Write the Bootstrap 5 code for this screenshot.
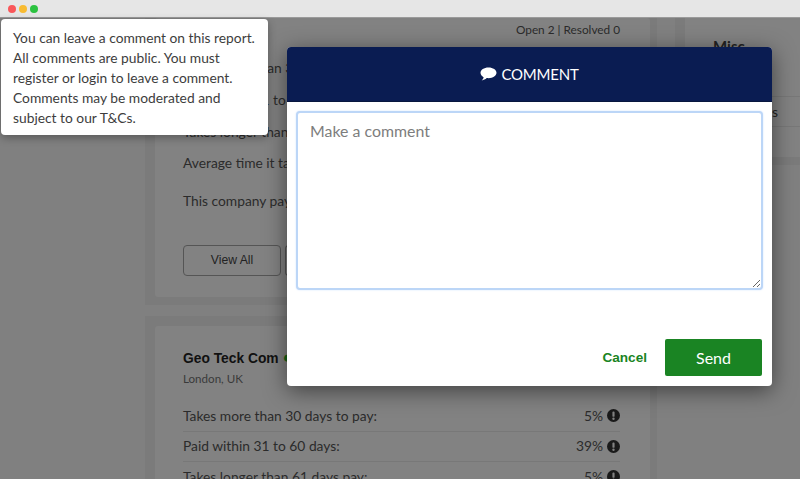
<!DOCTYPE html>
<html lang="en"><head><meta charset="utf-8"><title>Comment</title>
<link href="https://cdn.jsdelivr.net/npm/bootstrap@5.3.0/dist/css/bootstrap.min.css" rel="stylesheet">
<style>
html,body{height:100%;overflow:hidden}
body{background:#808080;font-family:Lato,"Noto Sans",sans-serif;color:#2b2b2b;width:800px;height:479px;position:relative}
.chrome{height:18px;background:#e6e6e6;border-bottom:1px solid #9a9a9a;gap:3px;padding-left:8px}
.dot{width:8px;height:8px;border-radius:50%}
.dot-r{background:#f9575a}.dot-y{background:#f8bb32}.dot-g{background:#2cc240}
.stage{height:461px;overflow:hidden;padding-left:145px;gap:18px}
.col-main{width:512px;flex:none}
.col-side{width:125px;flex:none}
.panel{background:#7b7b7b;padding:0 7px 8px 10px}
.panel-top{height:287px}
.panel-bottom{margin-top:11px;height:200px;padding-top:10px}
.panel-in{background:#828282;border-radius:3px;height:100%;padding:0 30px 0 28px;font-size:13.8px;position:relative}
.counts{text-align:right;font-size:11.8px;padding-top:5px;height:18px;line-height:14px}
.rowline{height:32px;line-height:32px;white-space:nowrap}
.rowline-short{height:31px}
.para{height:39px;line-height:22px;white-space:nowrap;margin-top:11px}
.vbtn{width:98px;height:31px;border:1px solid #555;border-radius:4px;font:12.2px/29px "Liberation Sans",sans-serif;color:#222;text-align:center;background:transparent;padding:0}
.vbtn2{width:30px;border-right:0;border-radius:4px 0 0 4px}
.geo{font:700 13.8px/18px "Liberation Sans",sans-serif;color:#111;padding-top:23px}
.geo span{color:#176317;font-size:17px;line-height:1}
.loc{font-size:11.6px;line-height:16px;margin-top:3px;margin-bottom:14px;color:#3a3a3a}
.statrow{height:30.5px;line-height:28px;border-bottom:1px solid #787878;white-space:nowrap}
.exc{width:13px;height:13px;flex:none}
.side-in{background:#828282;height:100%;padding:17px 0 0 28px;font-size:15px;font-weight:700;color:#222}
.sideline{height:30px;border-bottom:1px solid #787878;font-weight:400;margin-left:-28px;text-align:right;font-size:13.8px;padding-right:22px;padding-top:5px}
.sideline-first{height:39px}
.modal-box{position:absolute;left:287px;top:47px;width:485px;height:339px;background:#fff;border-radius:4px;box-shadow:0 5px 22px rgba(0,0,0,.5);overflow:hidden}
.modal-head{height:55px;background:#0a1c52;color:#fff;font-size:15px;letter-spacing:-.2px;gap:4px;border-bottom:1px solid #08173f}
.comment-area{display:block;width:467px;height:179px;margin:9px 0 0 9px;border:2px solid #bcd6f7;border-radius:4px;box-shadow:0 0 2px #cfe2ff;padding:6px 12px;font-size:15.9px;font-family:inherit;color:#333}
.comment-area::placeholder{color:#7d7d7d}
.modal-foot{padding:49px 10px 0 0;gap:18px}
.btn-cancel{font:700 13.6px "Liberation Sans",sans-serif;color:#1a8423;padding:0;border:0;background:none}
.btn-send{width:97px;height:37px;background:#1a8423;color:#fff;font-size:16px;border:0;border-radius:2px;padding:0}
.tip{position:absolute;left:1px;top:19px;width:267px;height:116px;background:#fff;border-radius:4px;box-shadow:0 3px 8px rgba(0,0,0,.3);padding:9px 12px;font-size:13.8px;line-height:20px;color:#3d3d3d}
</style></head>
<body>
<div class="chrome d-flex align-items-center"><span class="dot dot-r"></span><span class="dot dot-y"></span><span class="dot dot-g"></span></div>
<div class="stage d-flex">
  <div class="col-main">
    <div class="panel panel-top"><div class="panel-in">
      <div class="counts">Open 2 | Resolved 0</div>
      <div class="rowline mt-3">Takes more than 30 days to pay:</div>
      <div class="rowline">Paid within 31 to 60 days:</div>
      <div class="rowline rowline-short">Takes longer than 61 days pay:</div>
      <div class="rowline">Average time it takes to pay:</div>
      <div class="para">This company pays on time</div>
      <div class="d-flex gap-1 mt-3"><button class="vbtn">View All</button><button class="vbtn vbtn2"></button></div>
    </div></div>
    <div class="panel panel-bottom"><div class="panel-in">
      <div class="geo">Geo Teck Com <span>●</span></div>
      <div class="loc">London, UK</div>
      <div class="statrow d-flex justify-content-between align-items-center"><span>Takes more than 30 days to pay:</span><span class="d-flex align-items-center gap-1">5% <svg class="exc" viewBox="0 0 12 12"><circle cx="6" cy="6" r="6" fill="#1a1a1a"/><rect x="5" y="2.4" width="2" height="4.8" rx=".8" fill="#828282"/><circle cx="6" cy="9" r="1.1" fill="#828282"/></svg></span></div>
      <div class="statrow d-flex justify-content-between align-items-center"><span>Paid within 31 to 60 days:</span><span class="d-flex align-items-center gap-1">39% <svg class="exc" viewBox="0 0 12 12"><circle cx="6" cy="6" r="6" fill="#1a1a1a"/><rect x="5" y="2.4" width="2" height="4.8" rx=".8" fill="#828282"/><circle cx="6" cy="9" r="1.1" fill="#828282"/></svg></span></div>
      <div class="statrow d-flex justify-content-between align-items-center"><span>Takes longer than 61 days pay:</span><span class="d-flex align-items-center gap-1">5% <svg class="exc" viewBox="0 0 12 12"><circle cx="6" cy="6" r="6" fill="#1a1a1a"/><rect x="5" y="2.4" width="2" height="4.8" rx=".8" fill="#828282"/><circle cx="6" cy="9" r="1.1" fill="#828282"/></svg></span></div>
    </div></div>
  </div>
  <div class="col-side"><div class="panel" style="height:147px;padding:0 0 8px 10px"><div class="side-in">Misc
    <div class="sideline sideline-first"></div>
    <div class="sideline">s</div>
  </div></div></div>
</div>

<div class="modal-box">
  <div class="modal-head d-flex align-items-center justify-content-center">
    <svg width="17" height="14" viewBox="0 0 17 14"><path d="M8.5 0.5C4 0.5 0.5 2.8 0.5 5.8c0 1.8 1.2 3.4 3.1 4.4-.2 1.2-.9 2.3-1.9 3.2 1.9-.2 3.7-1 5-2.3.6.1 1.2.1 1.8.1 4.5 0 8-2.4 8-5.4S13 .5 8.5.5z" fill="#fff"/></svg>
    <span>COMMENT</span>
  </div>
  <textarea class="comment-area form-control" placeholder="Make a comment"></textarea>
  <div class="modal-foot d-flex justify-content-end align-items-center">
    <button class="btn-cancel">Cancel</button>
    <button class="btn-send">Send</button>
  </div>
</div>

<div class="tip">You can leave a comment on this report. All comments are public. You must register or login to leave a comment. Comments may be moderated and subject to our T&amp;Cs.</div>
<script src="https://cdn.jsdelivr.net/npm/bootstrap@5.3.0/dist/js/bootstrap.bundle.min.js"></script>
</body></html>
